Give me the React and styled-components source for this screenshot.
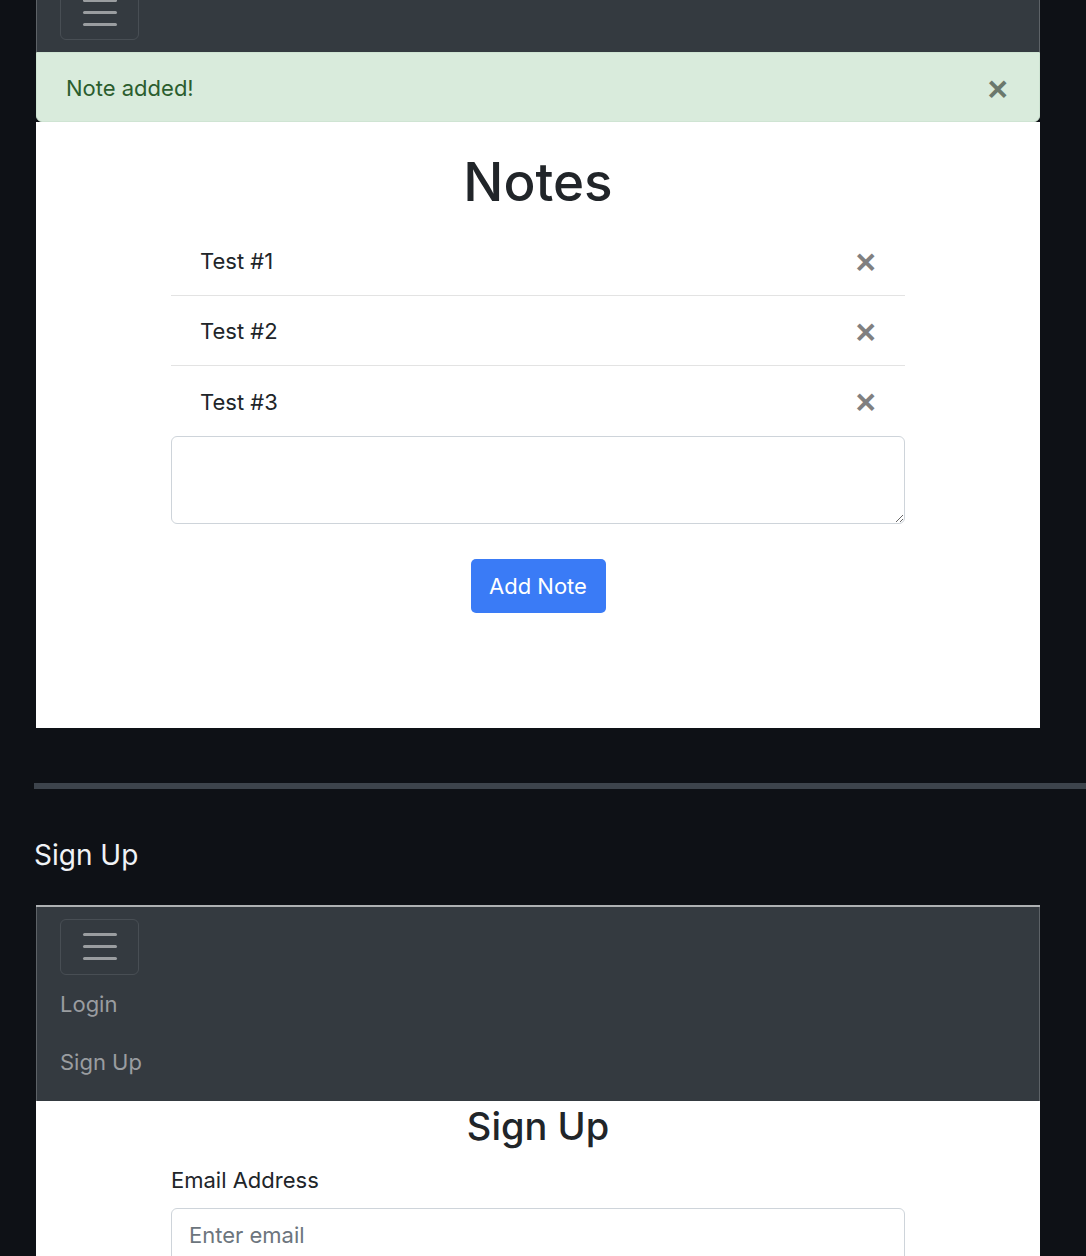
import React, { useState } from "react";
import styled, { createGlobalStyle } from "styled-components";

const GlobalStyle = createGlobalStyle`
    html, body {
        margin: 0;
        padding: 0;
        background: #0e1116;
        overflow: hidden;
    }
    body {
        font-family: Inter, "Noto Sans", sans-serif;
        color: #212529;
    }
    * {
        box-sizing: border-box;
    }
`;

const Column = styled.div`
    width: 1100px;
    padding-left: 34px;
    height: 1256px;
    overflow: hidden;
`;

const Shot = styled.div`
    width: 1004px;
    margin-left: 2px;
    margin-top: ${props => props.offset || 0}px;
    border-top: ${props => props.edge ? "2px solid #aeb1b3" : "none"};
`;

const Navbar = styled.nav`
    background: #343a40;
    border-left: 1px solid #5d6267;
    border-right: 1px solid #5d6267;
    padding: 12px 23px ${props => props.bottom || 12}px;
    display: flex;
    flex-direction: column;
    align-items: flex-start;
`;

const Toggler = styled.button`
    width: 79px;
    height: 56px;
    border: 1px solid #484e54;
    border-radius: 6px;
    background: transparent;
    display: flex;
    flex-direction: column;
    justify-content: center;
    align-items: center;
    gap: 9px;
    padding: 0;
    span {
        display: block;
        width: 34px;
        height: 3px;
        border-radius: 2px;
        background: #9a9da0;
    }
`;

const NavLink = styled.a`
    display: block;
    color: #9a9da0;
    font-size: 22px;
    line-height: 58px;
    height: 58px;
    text-decoration: none;
`;

const Alert = styled.div`
    height: 70px;
    background: #d9ebdc;
    border: 1px solid #cfe4d3;
    border-radius: 0 0 6px 6px;
    color: #2b5d2e;
    font-size: 22px;
    display: flex;
    align-items: center;
    justify-content: space-between;
    padding: 2px 31px 0 29px;
`;

const Close = styled.button`
    border: none;
    background: transparent;
    padding: 0;
    font-family: "Liberation Sans", Arial, sans-serif;
    font-weight: 700;
    font-size: 35px;
    line-height: 1;
    color: ${props => props.tone || "#808080"};
    cursor: pointer;
`;

const Panel = styled.div`
    background: #fff;
    padding: ${props => props.pad || "29px 0 115px"};
    display: flex;
    flex-direction: column;
    align-items: center;
`;

const Title = styled.h1`
    margin: 0 0 11px;
    font-size: ${props => props.size || 53}px;
    font-weight: 500;
    line-height: 1.2;
    color: #212529;
`;

const Content = styled.div`
    width: 734px;
    display: flex;
    flex-direction: column;
`;

const List = styled.ul`
    list-style: none;
    margin: 0;
    padding: 0;
`;

const Item = styled.li`
    height: 70px;
    border-bottom: 1px solid #e3e3e3;
    display: flex;
    align-items: center;
    justify-content: space-between;
    padding: 2px 29px 0;
    font-size: 22px;
    &:last-child {
        border-bottom: none;
    }
`;

const TextArea = styled.textarea`
    width: 100%;
    height: 88px;
    border: 1px solid #ced4da;
    border-radius: 6px;
    font-family: inherit;
    font-size: 22px;
    padding: 8px 16px;
    display: block;
    resize: vertical;
`;

const PrimaryButton = styled.button`
    align-self: center;
    margin-top: 35px;
    width: 135px;
    height: 54px;
    border: none;
    border-radius: 5px;
    background: #3a7bf6;
    color: #fff;
    font-family: inherit;
    font-size: 22px;
`;

const Rule = styled.div`
    height: 6px;
    background: #3d444c;
    margin-top: 55px;
`;

const SectionHeading = styled.h3`
    margin: 0;
    height: 116px;
    padding-top: 16px;
    display: flex;
    align-items: center;
    font-size: 28px;
    font-weight: 400;
    color: #f0f3f6;
`;

const Label = styled.label`
    display: block;
    font-size: 22px;
    line-height: 33px;
    margin: 4px 0 11px;
`;

const Input = styled.input`
    width: 100%;
    height: 54px;
    border: 1px solid #ced4da;
    border-radius: 6px;
    padding: 0 17px;
    font-family: inherit;
    font-size: 22px;
    &::placeholder {
        color: #6c757d;
    }
`;

const Hamburger = () => (
    <Toggler>
        <span />
        <span />
        <span />
    </Toggler>
);

export default () => {
    const [notes, setNotes] = useState(["Test #1", "Test #2", "Test #3"]);
    const [text, setText] = useState("");
    return (
        <>
            <GlobalStyle />
            <Column>
                <Shot offset={-28}>
                    <Navbar>
                        <Hamburger />
                    </Navbar>
                    <Alert>
                        Note added!
                        <Close tone="#6b786c">×</Close>
                    </Alert>
                    <Panel>
                        <Title>Notes</Title>
                        <Content>
                            <List>
                                {notes.map(note => (
                                    <Item key={note}>
                                        {note}
                                        <Close onClick={() => setNotes(notes.filter(n => n !== note))}>×</Close>
                                    </Item>
                                ))}
                            </List>
                            <TextArea value={text} onChange={e => setText(e.target.value)} />
                            <PrimaryButton>Add Note</PrimaryButton>
                        </Content>
                    </Panel>
                </Shot>
                <Rule />
                <SectionHeading>Sign Up</SectionHeading>
                <Shot edge>
                    <Navbar bottom={10}>
                        <Hamburger />
                        <NavLink href="#">Login</NavLink>
                        <NavLink href="#">Sign Up</NavLink>
                    </Navbar>
                    <Panel pad="3px 0 40px">
                        <Title size={38} as="h2">Sign Up</Title>
                        <Content>
                            <Label>Email Address</Label>
                            <Input placeholder="Enter email" />
                        </Content>
                    </Panel>
                </Shot>
            </Column>
        </>
    );
};
